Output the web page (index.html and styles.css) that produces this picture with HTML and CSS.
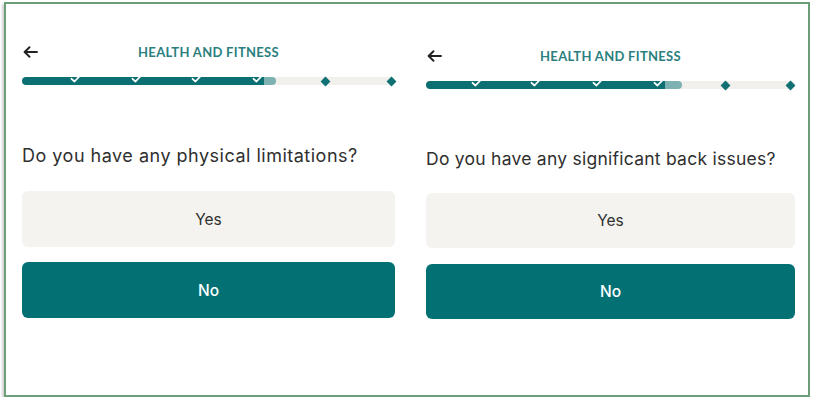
FILE: index.html
```html
<!DOCTYPE html>
<html>
<head>
<meta charset="utf-8">
<link rel="stylesheet" href="styles.css">
</head>
<body>
<div class="frame">
  <section class="panel panel-left">
    <div class="header">
      <svg class="back" width="15" height="12" viewBox="0 0 15 12"><path d="M14 6H1.8M6.5 1.2L1.6 6l4.9 4.8" fill="none" stroke="#222" stroke-width="1.9" stroke-linecap="round" stroke-linejoin="round"/></svg>
      <h1 class="title">HEALTH AND FITNESS</h1>
    </div>
    <div class="bar">
      <div class="fill" style="width:254px"><div class="fill-dark" style="width:242px"></div></div>
      <svg class="check" style="left:48px" width="12" height="9" viewBox="0 0 12 9"><path d="M1.5 4.8L4.5 7.5L10.5 1.2" fill="none" stroke="#fff" stroke-width="1.8" stroke-linecap="round" stroke-linejoin="round"/></svg>
      <svg class="check" style="left:109px" width="12" height="9" viewBox="0 0 12 9"><path d="M1.5 4.8L4.5 7.5L10.5 1.2" fill="none" stroke="#fff" stroke-width="1.8" stroke-linecap="round" stroke-linejoin="round"/></svg>
      <svg class="check" style="left:169px" width="12" height="9" viewBox="0 0 12 9"><path d="M1.5 4.8L4.5 7.5L10.5 1.2" fill="none" stroke="#fff" stroke-width="1.8" stroke-linecap="round" stroke-linejoin="round"/></svg>
      <svg class="check" style="left:230px" width="12" height="9" viewBox="0 0 12 9"><path d="M1.5 4.8L4.5 7.5L10.5 1.2" fill="none" stroke="#fff" stroke-width="1.8" stroke-linecap="round" stroke-linejoin="round"/></svg>
      <span class="diamond" style="left:300px"></span>
      <span class="diamond" style="left:366px"></span>
    </div>
    <p class="question">Do you have any physical limitations?</p>
    <button class="option option-yes">Yes</button>
    <button class="option option-no">No</button>
  </section>
  <section class="panel panel-right">
    <div class="header">
      <svg class="back" width="15" height="12" viewBox="0 0 15 12"><path d="M14 6H1.8M6.5 1.2L1.6 6l4.9 4.8" fill="none" stroke="#222" stroke-width="1.9" stroke-linecap="round" stroke-linejoin="round"/></svg>
      <h1 class="title">HEALTH AND FITNESS</h1>
    </div>
    <div class="bar">
      <div class="fill" style="width:256px"><div class="fill-dark" style="width:239px"></div></div>
      <svg class="check" style="left:45px" width="12" height="9" viewBox="0 0 12 9"><path d="M1.5 4.8L4.5 7.5L10.5 1.2" fill="none" stroke="#fff" stroke-width="1.8" stroke-linecap="round" stroke-linejoin="round"/></svg>
      <svg class="check" style="left:104px" width="12" height="9" viewBox="0 0 12 9"><path d="M1.5 4.8L4.5 7.5L10.5 1.2" fill="none" stroke="#fff" stroke-width="1.8" stroke-linecap="round" stroke-linejoin="round"/></svg>
      <svg class="check" style="left:166px" width="12" height="9" viewBox="0 0 12 9"><path d="M1.5 4.8L4.5 7.5L10.5 1.2" fill="none" stroke="#fff" stroke-width="1.8" stroke-linecap="round" stroke-linejoin="round"/></svg>
      <svg class="check" style="left:227px" width="12" height="9" viewBox="0 0 12 9"><path d="M1.5 4.8L4.5 7.5L10.5 1.2" fill="none" stroke="#fff" stroke-width="1.8" stroke-linecap="round" stroke-linejoin="round"/></svg>
      <span class="diamond" style="left:296px"></span>
      <span class="diamond" style="left:361px"></span>
    </div>
    <p class="question">Do you have any significant back issues?</p>
    <button class="option option-yes">Yes</button>
    <button class="option option-no">No</button>
  </section>
</div>
</body>
</html>
```
FILE: styles.css
```css
* { box-sizing: border-box; }
html, body { margin: 0; padding: 0; background: #fff; }
body { font-family: "Inter", "Liberation Sans", sans-serif; color: #2f2f2f; }

.frame {
  margin: 2px 0 0 4px;
  width: 806px;
  height: 395px;
  border: 2px solid #6c9f78;
  box-shadow: -2px 2px 2px rgba(0,0,0,0.18);
  display: flex;
  padding-left: 16px;
}

.panel { display: flex; flex-direction: column; }
.panel-left { width: 373px; padding-top: 38px; }
.panel-right { width: 369px; margin-left: 31px; padding-top: 42px; }

.header {
  height: 20px;
  position: relative;
  display: flex;
  align-items: center;
  justify-content: center;
}
.back { position: absolute; left: 1px; top: 4px; }
.title {
  margin: 0;
  font-family: "Lato", "Liberation Sans", sans-serif;
  font-weight: 700;
  font-size: 13px;
  letter-spacing: 0.3px;
  color: #2b7f80;
}

.bar {
  position: relative;
  margin-top: 15px;
  height: 8px;
  border-radius: 4px;
  background: #f1f0ec;
}
.fill {
  height: 8px;
  border-radius: 4px;
  background: #7eb2b2;
  overflow: hidden;
}
.fill-dark {
  height: 8px;
  border-radius: 4px 0 0 4px;
  background: #0c6f72;
}
.check { position: absolute; top: -3px; }
.diamond {
  position: absolute;
  top: 0.5px;
  width: 7px;
  height: 7px;
  background: #0f7173;
  transform: rotate(45deg);
}

.question {
  margin: 59px 0 0;
  font-size: 18px;
  letter-spacing: 0.5px;
  line-height: 24px;
  color: #2f2f2f;
}

.option {
  height: 56px;
  border: none;
  border-radius: 6px;
  font-family: "Inter", "Liberation Sans", sans-serif;
  font-size: 15.5px;
  cursor: pointer;
}
.option-yes { margin-top: 23px; background: #f4f3ef; color: #2f2f2f; }
.option-no { margin-top: 15px; background: #037174; color: #fff; font-weight: 500; }

.panel-right .question { margin-top: 58px; font-size: 17.5px; letter-spacing: 0.25px; }
.panel-right .option { height: 55px; }
.panel-right .option-yes { margin-top: 22px; }
.panel-right .option-no { margin-top: 16px; }
```
